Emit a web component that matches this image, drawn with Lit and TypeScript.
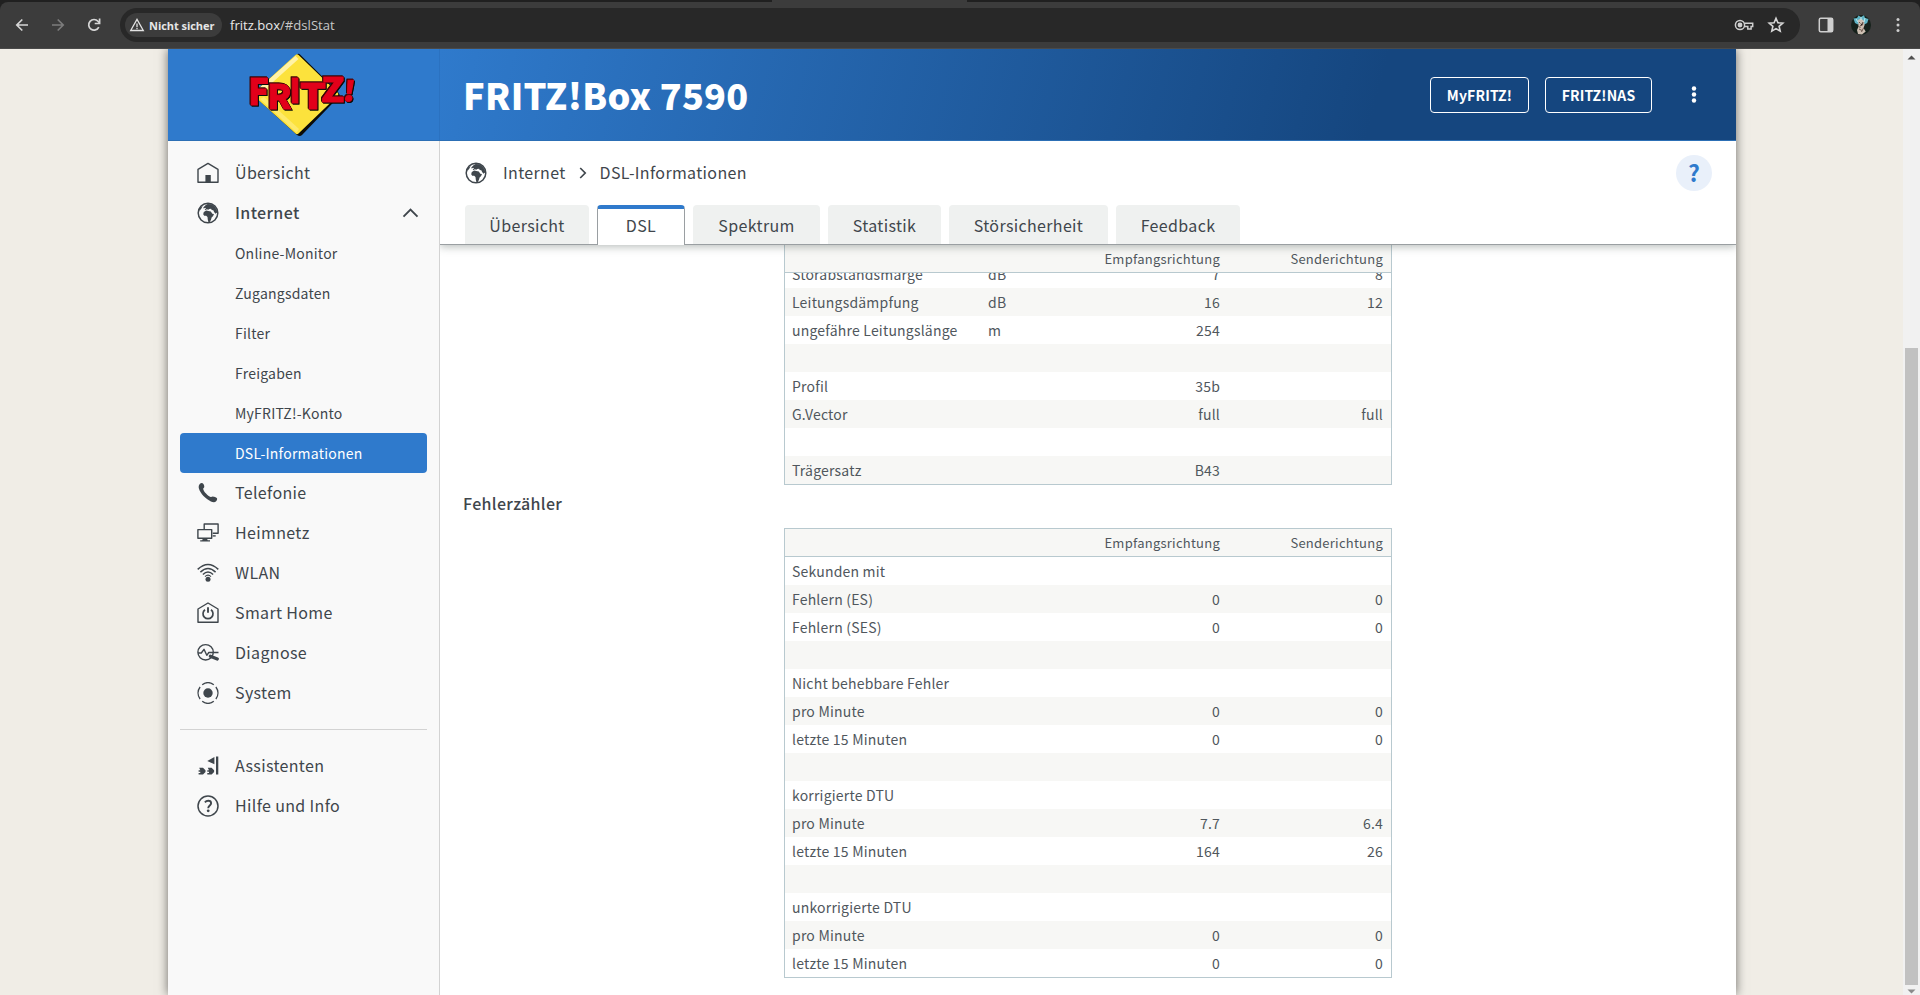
import { LitElement, html, css, svg, nothing } from "lit";
import { customElement } from "lit/decorators.js";
import { classMap } from "lit/directives/class-map.js";

const globe = svg`
  <circle cx="11" cy="11" r="9.8" fill="none" stroke="currentColor" stroke-width="1.5"/>
  <path fill="currentColor" d="M8.2 3.4 10.6 2l3.6.3 3.4 2 2.2 3.6.3 2.6-1.6 1.2-1.4-1.6-.8-1.8-1.6-.3-.6-1.2-2 .1-.7.9-1.6-.5-1.5 1-.6-.6 1.3-1.3-.9-.6-1.4.8-.5-.8z"/>
  <path fill="currentColor" d="M6.800 10 9.300 8.600l2 .4 2.500.5 1.500 2.300 1.700.3-.9 1.800-1.500 1.500-.6 2.400-1.500 2.600-1 .2-.7-2.900-.3-2.600-1.300-1.300-2-.1-1-1.500z"/>
  <path fill="currentColor" d="M1.8 8 3.6 5.2 5.9 3.4 4.4 6.4 2.9 8.600z"/>`;

const icons: Record<string, unknown> = {
  home: svg`<path d="M1 20.2V7.4L11 1.4l10 6v12.8z" fill="none" stroke="currentColor" stroke-width="1.4" stroke-linejoin="round"/><path d="M8.4 13h5.4v7.2H8.4z" fill="currentColor"/>`,
  globe,
  phone: svg`<path fill="currentColor" d="M3 1.700c1-.9 2.700-.8 3.400.2.7 1 1.100 2.500.8 3.400-.2.7-1.100 1-1 1.700.4 2.600 4.700 7 7.500 8 .8.300 1.300-.5 2-.6 1.300-.1 3.200.8 4.100 1.600.8.900.2 2.300-.7 3.300-1.200 1.300-3.300 1.100-5.200.1C8.700 16.900 3.400 11.600 1.900 6.500 1.400 4.700 1.800 2.700 3 1.700z"/>`,
  net: svg`<g fill="none" stroke="currentColor" stroke-width="1.4" stroke-linejoin="round"><path d="M7.200 7V2h13.900v9.200h-5.400"/><path d="M.9 7.600h13.800v8.700H.9z"/><path d="M15.700 13.900h3"/></g><path fill="currentColor" d="M5.900 16.300h4l.8 2H13v1.300H3.200v-1.300h2z"/>`,
  wlan: svg`<g fill="none" stroke="currentColor" stroke-width="1.500"><path d="M.7 7.400Q11-2.400 21.300 7.400"/><path d="M3.400 10.100Q11 2.800 18.600 10.100"/><path d="M5.900 12.500Q11 7.600 16.100 12.500"/><path d="M8 14.600Q11 11.800 14 14.600" stroke-width="1.100"/></g><circle cx="11" cy="17.300" r="2.500" fill="currentColor"/>`,
  smart: svg`<g fill="none" stroke="currentColor"><path d="M1 20.200V7L11 1l10 6v13.200z" stroke-width="1.400" stroke-linejoin="round"/><path d="M8 7.700a5 5 0 1 0 6 0" stroke-width="1.700"/><path d="M11 5.200v5.600" stroke-width="1.900"/></g>`,
  diag: svg`<g fill="none" stroke="currentColor" stroke-width="1.400"><circle cx="8.600" cy="10.300" r="7.700"/><path d="M1 11h3.300L7 7.300l2.800 6 2-2.800H21.500" stroke-linejoin="round"/></g><path d="M13.400 14.200 20.300 17" stroke="currentColor" stroke-width="3.200" stroke-linecap="round"/>`,
  system: svg`<circle cx="11" cy="11" r="4.700" fill="currentColor"/><g fill="none" stroke="currentColor" stroke-width="1.400"><path d="M5.200 2.700a10 10 0 0 1 11.600 0M5.200 19.300a10 10 0 0 0 11.600 0M3.100 5a10 10 0 0 0 0 12M18.900 5a10 10 0 0 1 0 12"/></g>`,
  assist: svg`<path fill="currentColor" d="M19 1.500h2.300v18H19zM10.300 5.900 17.400 2v7.300zM2.200 12.800H6l2.500 2.400v1.800L6 19.500H1.600V18h1.700v-1.200H1.600v-1.500h1.700zM10.800 12.800h3.800l2.500 2.400v1.800l-2.500 2.500h-4.300V18H12v-1.200h-1.700v-1.500H12z"/>`,
  help: svg`<circle cx="11" cy="11" r="10" fill="none" stroke="currentColor" stroke-width="1.500"/><path d="M7.900 7.300Q9.200 5.800 11.200 5.800c1.800 0 2.900.9 2.900 2.400 0 2.200-2.900 2.500-2.900 5" fill="none" stroke="currentColor" stroke-width="1.900"/><circle cx="11.200" cy="15.800" r="1.400" fill="currentColor"/>`,
};

@customElement("fb-icon")
class FbIcon extends LitElement {
  static properties = { name: {} };
  declare name: string;
  static styles = css`
    :host { display: block; width: 22px; height: 22px; flex: none; color: #3f464c; }
    svg { display: block; }
  `;
  render() {
    return html`<svg width="22" height="22" viewBox="0 0 22 22">${icons[this.name]}</svg>`;
  }
}

@customElement("browser-bar")
class BrowserBar extends LitElement {
  static styles = css`
    :host { display: block; height: 49px; background: #202020; box-sizing: border-box; font-family: "Open Sans", sans-serif; }
    .strip { height: 2px; padding-left: 772px; }
    .strip div { width: 195px; height: 2px; background: #3c3c3c; }
    .bar { height: 47px; box-sizing: border-box; background: #3c3c3c; border-bottom: 1px solid #4a4a4a; border-radius: 8px 8px 0 0; display: flex; align-items: center; padding: 0 12px 0 14px; }
    svg { display: block; flex: none; }
    .nav { display: flex; gap: 20px; width: 106px; padding-bottom: 1px; box-sizing: border-box; }
    .omni { flex: 1; height: 34px; border-radius: 17px; background: #282828; display: flex; align-items: center; padding: 0 14px 0 5px; box-sizing: border-box; }
    .chip { display: flex; align-items: center; height: 24px; width: 97px; box-sizing: border-box; border-radius: 12px; background: #3c3c3c; padding-left: 4px; gap: 4px; font-size: 11px; font-weight: 700; color: #e6e6e6; white-space: nowrap; letter-spacing: -.05px; }
    .url { margin-left: 8px; font-size: 13.1px; color: #c7c7c7; flex: 1; }
    .url b { font-weight: 400; color: #e8e8e8; }
    .acts { display: flex; gap: 12px; }
    .right { display: flex; align-items: center; width: 108px; justify-content: flex-end; gap: 15px; }
  `;
  render() {
    return html`<div class="strip"><div></div></div><div class="bar">
      <div class="nav">
        <svg width="16" height="16" viewBox="0 0 16 16" fill="none" stroke="#d6d6d6" stroke-width="1.700"><path d="M14 8H3M8.300 2.500 2.800 8l5.500 5.500"/></svg>
        <svg width="16" height="16" viewBox="0 0 16 16" fill="none" stroke="#7c7c7c" stroke-width="1.700"><path d="M2 8h11M7.700 2.500 13.200 8l-5.500 5.500"/></svg>
        <svg width="16" height="16" viewBox="0 0 16 16" fill="none" stroke="#d6d6d6" stroke-width="1.700"><path d="M12.800 10.100A5.300 5.300 0 1 1 12 4.300L13.500 6"/><path d="M13.600 1.600v4.900H8.700"/></svg>
      </div>
      <div class="omni">
        <div class="chip"><svg width="16" height="16" viewBox="0 0 16 16"><path d="M8 2.400 14.300 13.500H1.700z" fill="none" stroke="#e3e3e3" stroke-width="1.300"/><path d="M8 6.400v3.500M8 10.800v1.400" stroke="#e3e3e3" stroke-width="1.300"/></svg>Nicht sicher</div>
        <div class="url"><b>fritz.box</b>/#dslStat</div>
        <div class="acts">
          <svg width="20" height="20" viewBox="0 0 20 20" fill="none" stroke="#cfcfcf" stroke-width="1.500"><circle cx="6" cy="10" r="4.600"/><circle cx="6" cy="10" r="1.700" fill="#cfcfcf"/><path d="M10.500 8.300H18.700v3.300h-1.600v2.500h-3.300v-2.500h-3.300"/></svg>
          <svg width="20" height="20" viewBox="0 0 20 20" fill="none" stroke="#d6d6d6" stroke-width="1.600"><path d="m10 3.200 1.900 4.500 4.900.4-3.700 3.200 1.100 4.800L10 13.600l-4.200 2.500 1.100-4.800-3.700-3.200 4.900-.4z"/></svg>
        </div>
      </div>
      <div class="right">
        <svg width="16" height="16" viewBox="0 0 16 16"><rect x="1.300" y="1.300" width="13.400" height="13.400" rx="1.500" fill="none" stroke="#cfcfcf" stroke-width="1.500"/><path d="M9.500 1h5.200v14H9.500z" fill="#cfcfcf"/></svg>
        <svg width="24" height="24" viewBox="0 0 24 24"><circle cx="12" cy="12" r="10" fill="#15211b"/><path d="M4.500 5.500 8 5l1.500-2.500L12 4l3-1.800L16 5l3.500 1-1.300 4-3 1.500L12 8l-3 3.500L6 10z" fill="#5fb4c6"/><path d="m9 7 3-1.500L15 8l.6 4-1.100 3 2.200 3.500L13 21.500l-4-.5-1-4 1.500-3.200z" fill="#cdbfb2"/><path d="m10 9 1.500 1.500M14 9l-.5 3-2.500 1M10 16l3 1.500M14.500 15l-2 4M9.500 13l2 2" stroke="#6b554b" stroke-width="1"/><path d="m7 6 2 3M16 5l-1 4M12 4v3" stroke="#c9eef2" stroke-width=".9"/></svg>
        <svg width="20" height="20" viewBox="0 0 20 20" fill="#cfcfcf"><circle cx="10" cy="4.500" r="1.500"/><circle cx="10" cy="10" r="1.500"/><circle cx="10" cy="15.500" r="1.500"/></svg>
      </div>
    </div>`;
  }
}

// glyph, x, baseline, horizontal scale, font size
const letters: [string, number, number, number, number][] = [
  ["F", 8.300, 54.500, 0.95, 36],
  ["R", 27.300, 59, 1.03, 33.500],
  ["I", 49.400, 53, 0.95, 33.500],
  ["T", 60, 59, 1.170, 35],
  ["Z", 81.300, 51.500, 1.140, 33],
  ["!", 102.500, 51, 1.1, 27],
];

@customElement("fritz-logo")
class FritzLogo extends LitElement {
  static styles = css`
    :host, svg { display: block; }
    text { font-family: "Noto Sans CJK JP", sans-serif; font-weight: 900; }
    .word { fill: #e2001a; stroke: #e2001a; stroke-width: 1px; filter: drop-shadow(.4px .4px 0 #3a0505) drop-shadow(-.4px -.4px 0 #3a0505) drop-shadow(1.400px 1.400px 0 #0c0c08); }
  `;
  render() {
    return html`<svg width="130" height="90" viewBox="0 0 130 90">
      <path d="M57 4.500Q58.500 3 60.500 5L98 42 100 45.500 62 85Q60 87 57 85L14 46 13 43z" fill="#0c0c08"/>
      <path d="M55.500 5Q57 3.600 58.600 5L97.500 42.500Q99 44.200 97.500 46L58.500 83.500Q57 85 55.500 83.500L14 46Q12.500 44.200 14 42.500z" fill="#fce23c"/>
      <path d="M55.500 6 58.500 9 28 36.500 27 40H17z" fill="#fff3a8"/>
      <path d="M20 49 56.500 82.500 59 79 24 47z" fill="#fff08a" opacity=".6"/>
      <g class="word">${letters.map(([c, x, y, s, f]) => svg`<text font-size=${f} transform="translate(${x} ${y}) scale(${s} 1)${c === "!" ? " skewX(-6)" : ""}">${c}</text>`)}</g>
    </svg>`;
  }
}

interface NavItem { label: string; icon?: string; kind?: "open" | "active" }
const nav: NavItem[] = [
  { label: "Übersicht", icon: "home" },
  { label: "Internet", icon: "globe", kind: "open" },
  { label: "Online-Monitor" },
  { label: "Zugangsdaten" },
  { label: "Filter" },
  { label: "Freigaben" },
  { label: "MyFRITZ!-Konto" },
  { label: "DSL-Informationen", kind: "active" },
  { label: "Telefonie", icon: "phone" },
  { label: "Heimnetz", icon: "net" },
  { label: "WLAN", icon: "wlan" },
  { label: "Smart Home", icon: "smart" },
  { label: "Diagnose", icon: "diag" },
  { label: "System", icon: "system" },
];
const extra: NavItem[] = [
  { label: "Assistenten", icon: "assist" },
  { label: "Hilfe und Info", icon: "help" },
];

@customElement("side-nav")
class SideNav extends LitElement {
  static styles = css`
    :host { display: block; width: 247px; border-right: 1px solid #d3d3d3; background: #f9f9f9; padding: 12px 12px 0; }
    .item { display: flex; align-items: center; height: 40px; border-radius: 4px; padding: 0 8px 0 16.500px; gap: 16.500px; font-size: 16px; letter-spacing: .35px; color: #3f464c; line-height: 24px; }
    .label { flex: 1; padding-bottom: 2px; }
    .sub { padding-left: 55px; font-size: 14px; letter-spacing: .23px; }
    .sub .label { padding-bottom: 0; }
    .open { font-weight: 500; }
    .active { background: #2f7acc; color: #fff; }
    .rule { height: 1px; background: #d3d3d3; margin: 16px 0; }
  `;
  item(i: NavItem) {
    return html`<div class=${classMap({ item: true, sub: !i.icon, open: i.kind === "open", active: i.kind === "active" })}>
      ${i.icon ? html`<fb-icon .name=${i.icon}></fb-icon>` : nothing}
      <span class="label">${i.label}</span>
      ${i.kind === "open" ? html`<svg width="17" height="10" viewBox="0 0 17 10"><path d="M1.500 8.700 8.500 1.700l7 7" fill="none" stroke="#3f464c" stroke-width="1.900"/></svg>` : nothing}
    </div>`;
  }
  render() {
    return html`${nav.map((i) => this.item(i))}<div class="rule"></div>${extra.map((i) => this.item(i))}`;
  }
}

type Row = [string, string, string, string];
const blank: Row = ["", "", "", ""];
const line: Row[] = [
  ["Störabstandsmarge", "dB", "7", "8"],
  ["Leitungsdämpfung", "dB", "16", "12"],
  ["ungefähre Leitungslänge", "m", "254", ""],
  blank,
  ["Profil", "", "35b", ""],
  ["G.Vector", "", "full", "full"],
  blank,
  ["Trägersatz", "", "B43", ""],
];
const errors: Row[] = [
  ["Sekunden mit", "", "", ""],
  ["Fehlern (ES)", "", "0", "0"],
  ["Fehlern (SES)", "", "0", "0"],
  blank,
  ["Nicht behebbare Fehler", "", "", ""],
  ["pro Minute", "", "0", "0"],
  ["letzte 15 Minuten", "", "0", "0"],
  blank,
  ["korrigierte DTU", "", "", ""],
  ["pro Minute", "", "7.7", "6.4"],
  ["letzte 15 Minuten", "", "164", "26"],
  blank,
  ["unkorrigierte DTU", "", "", ""],
  ["pro Minute", "", "0", "0"],
  ["letzte 15 Minuten", "", "0", "0"],
];

@customElement("stat-table")
class StatTable extends LitElement {
  static properties = { rows: { attribute: false }, scrolled: { type: Boolean } };
  declare rows: Row[];
  declare scrolled: boolean;
  static styles = css`
    :host { display: block; box-sizing: border-box; width: 608px; border: 1px solid #b8c9cf; background: #fff; color: #50575d; }
    :host([scrolled]) { border-top: 0; }
    .row { display: grid; grid-template-columns: 196px 112px 120px 163px; padding: 0 7px; height: 28px; line-height: 28px; font-size: 14px; letter-spacing: .2px; white-space: nowrap; }
    .row:nth-child(even) { background: #f7f7f5; }
    .row.head { height: 27px; line-height: 27px; background: #f7f7f5; border-bottom: 1px solid #b8c9cf; font-size: 13px; letter-spacing: .25px; }
    .n { text-align: right; }
    .body { overflow: hidden; }
    .cut { margin-top: -13px; }
  `;
  render() {
    return html`
      <div class="row head"><span></span><span></span><span class="n">Empfangsrichtung</span><span class="n">Senderichtung</span></div>
      <div class="body">${this.rows.map((r, i) => html`<div class=${classMap({ row: true, cut: this.scrolled && i === 0 })}>
        <span>${r[0]}</span><span>${r[1]}</span><span class="n">${r[2]}</span><span class="n">${r[3]}</span>
      </div>`)}</div>`;
  }
}

const tabs: [string, string][] = [
  ["Übersicht", "w1"], ["DSL", "w2"], ["Spektrum", "w3"], ["Statistik", "w4"], ["Störsicherheit", "w5"], ["Feedback", "w6"],
];

@customElement("app-root")
class AppRoot extends LitElement {
  static styles = css`
    :host { display: flex; flex-direction: column; height: 995px; overflow: hidden; font-family: "Noto Sans CJK JP", "Noto Sans CJK SC", sans-serif; color: #3f464c; }
    .view { flex: 1; min-height: 0; display: flex; background: #f0ede6; }
    .desk { flex: 1; display: flex; overflow: hidden; padding-left: 168px; }
    .page { width: 1568px; display: flex; flex-direction: column; background: #fff; box-shadow: 0 0 10px rgba(0, 0, 0, .55); }
    .header { height: 91px; display: flex; border-bottom: 1px solid #2c6fb5; flex: none; }
    .brand { width: 199px; background: #2f7acc; border-right: 1px solid #2b72c1; padding: 1px 0 0 72px; }
    .title { flex: 1; display: flex; align-items: center; padding: 0 33px 0 23px; background: linear-gradient(105deg, #2f7acc 0%, #15467f 72%); }
    h1 { flex: 1; margin: 0; font-size: 36px; font-weight: 900; line-height: 52px; letter-spacing: .25px; color: #fff; padding-bottom: 2px; }
    .btn { box-sizing: border-box; height: 36px; border: 1px solid #fff; border-radius: 4px; color: #fff; font-size: 14px; font-weight: 700; letter-spacing: .15px; line-height: 34px; text-align: center; width: 107px; }
    .btn.my { width: 99px; margin-right: 16px; }
    .dots { margin-left: 33px; }
    .cols { flex: 1; min-height: 0; display: flex; }
    .main { flex: 1; display: flex; flex-direction: column; min-width: 0; }
    .top { flex: none; height: 103px; border-bottom: 1px solid #9a9fa2; box-shadow: 0 2px 8px rgba(60, 75, 70, .35); position: relative; z-index: 1; background: #fff; display: flex; flex-direction: column; justify-content: space-between; clip-path: inset(0 0 -14px 0); }
    .crumbs { display: flex; align-items: center; height: 64px; padding: 0 24px 0 25px; font-size: 16px; letter-spacing: .35px; line-height: 24px; }
    .crumbs span { padding-bottom: 2px; }
    .crumbs fb-icon { margin-right: 16px; }
    .chev { margin: 0 13px; }
    .grow { flex: 1; }
    .q { width: 36px; height: 36px; border-radius: 50%; background: #e9f0fa; color: #2f7acc; font-weight: 700; font-size: 23px; line-height: 35px; text-align: center; letter-spacing: 0; }
    .tabs { display: flex; gap: 8px; padding-left: 25px; height: 39px; }
    .tab { height: 39px; box-sizing: border-box; background: #eff1f0; border-radius: 4px 4px 0 0; text-align: center; font-size: 16px; letter-spacing: .35px; line-height: 41px; }
    .tab.on { background: #fff; height: 40px; border: 1px solid #9a9fa2; border-top: 4px solid #2f7acc; border-bottom: 0; line-height: 33px; }
    .w1 { width: 124px; } .w2 { width: 88px; } .w3 { width: 127px; } .w4 { width: 113px; } .w5 { width: 159px; } .w6 { width: 124px; }
    .content { flex: 1; overflow: hidden; padding-left: 23px; }
    .content stat-table { margin-left: 321px; }
    h2 { margin: 0 0 7px; font-size: 16px; font-weight: 500; line-height: 36px; letter-spacing: .35px; }
    .scroll { width: 17px; background: #f1f1f1; display: flex; flex-direction: column; align-items: center; box-sizing: border-box; padding: 5px 0 1px; }
    .thumb { width: 13px; height: 637px; background: #c1c1c1; margin-top: auto; margin-bottom: 4px; }
    svg { display: block; }
  `;
  render() {
    return html`
      <browser-bar></browser-bar>
      <div class="view">
        <div class="desk"><div class="page">
          <div class="header">
            <div class="brand"><fritz-logo></fritz-logo></div>
            <div class="title">
              <h1>FRITZ!Box 7590</h1>
              <div class="btn my">MyFRITZ!</div>
              <div class="btn">FRITZ!NAS</div>
              <svg class="dots" width="18" height="20" viewBox="0 0 18 20" fill="#fff"><circle cx="9" cy="3.500" r="2.200"/><circle cx="9" cy="9.500" r="2.200"/><circle cx="9" cy="15.500" r="2.200"/></svg>
            </div>
          </div>
          <div class="cols">
            <side-nav></side-nav>
            <div class="main">
              <div class="top">
                <div class="crumbs">
                  <fb-icon .name=${"globe"}></fb-icon><span>Internet</span>
                  <svg class="chev" width="8" height="12" viewBox="0 0 8 12"><path d="M1.200 1 6.200 6l-5 5" fill="none" stroke="#3f464c" stroke-width="1.700"/></svg>
                  <span>DSL-Informationen</span><span class="grow"></span><div class="q">?</div>
                </div>
                <div class="tabs">${tabs.map(([t, w]) => html`<div class="tab ${w} ${t === "DSL" ? "on" : ""}">${t}</div>`)}</div>
              </div>
              <div class="content">
                <stat-table scrolled .rows=${line}></stat-table>
                <h2>Fehlerzähler</h2>
                <stat-table .rows=${errors}></stat-table>
              </div>
            </div>
          </div>
        </div></div>
        <div class="scroll">
          <svg width="9" height="6" viewBox="0 0 9 6"><path d="M.5 5.500 4.500 1.500l4 4z" fill="#505050"/></svg>
          <div class="thumb"></div>
          <svg width="9" height="5" viewBox="0 0 9 5"><path d="M.5.5h8l-4 4z" fill="#8a8a8a"/></svg>
        </div>
      </div>`;
  }
}
